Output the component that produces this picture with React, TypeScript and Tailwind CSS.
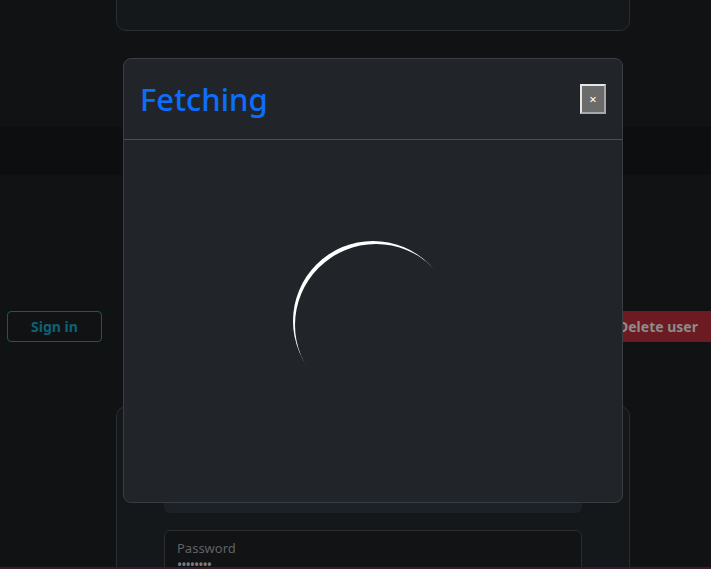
import React from 'react';

export default function App() {
  return (
    <div
      className="relative h-[569px] w-full overflow-hidden bg-[#111214]"
      style={{ fontFamily: '"Noto Sans", "Open Sans", Arial, sans-serif' }}
    >
      {/* Page content behind the dimmed backdrop */}
      <div className="ml-[116px] -mt-[20px] h-[51px] w-[514px] rounded-b-[10px] border border-[#2a2d31] bg-[#15181b]" />

      <div className="mt-[96px] h-[48px] w-full bg-[#0d0e10]" />

      <div className="mt-[136px] flex h-[31px] items-stretch justify-between">
        <button className="ml-[7px] w-[95px] rounded-[4px] border border-[#0f5a66] text-[14px] font-bold text-[#0e6275]">
          Sign in
        </button>
        <button className="w-[102px] bg-[#6b1b21] pl-[9px] text-left text-[14px] font-bold text-[#8c8c8c]">
          Delete user
        </button>
      </div>

      <div className="ml-[116px] mt-[64px] h-[200px] w-[514px] rounded-t-[10px] border border-[#2a2d31] bg-[#15181b] px-[47px] pt-[60px]">
        <div className="h-[46px] rounded-b-[6px] bg-[#1c2027]" />
        <div className="mt-[17px] h-[60px] rounded-[6px] border border-[#2a2d31] bg-[#111315] px-[12px] pt-[9px]">
          <div className="text-[13px] leading-[16px] text-[#5f6266]">Password</div>
          <div className="mt-[3px] text-[14px] leading-[12px] tracking-[-1px] text-[#7a7d80]">••••••••</div>
        </div>
      </div>

      <div className="absolute bottom-0 left-0 h-[2px] w-full bg-[#3a1a2d]" />

      {/* Modal */}
      <div className="absolute left-[123px] top-[58px] flex h-[445px] w-[500px] flex-col overflow-hidden rounded-[8px] border border-[#3a3d42] bg-[#212529]">
        <div className="flex h-[81px] shrink-0 items-center justify-between border-b border-[#4b4f54] px-[16px]">
          <h1 className="pt-[1px] text-[31px] font-medium leading-none text-[#0d6efd]">Fetching</h1>
          <button className="flex h-[30px] w-[26px] items-center justify-center border-2 border-t-[#e6e6e6] border-l-[#e6e6e6] border-r-[#a8a8a8] border-b-[#a8a8a8] bg-[#6b6b6b] text-[13px] leading-none text-white">
            ×
          </button>
        </div>
        <div className="flex flex-1 items-center justify-center">
          <div className="h-[160px] w-[160px] rounded-full shadow-[inset_3px_4px_0_-1px_#ffffff]" />
        </div>
      </div>
    </div>
  );
}
